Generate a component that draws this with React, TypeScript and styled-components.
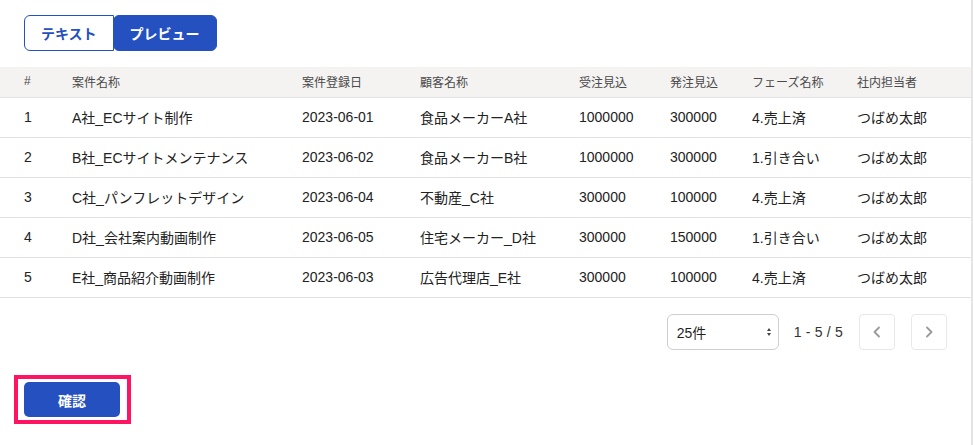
import React from "react";
import styled, { createGlobalStyle } from "styled-components";

const Global = createGlobalStyle`
  html, body { margin: 0; padding: 0; background: #fff; }
  body {
    font-family: "Liberation Sans", "Noto Sans CJK JP", sans-serif;
    color: #262626;
    -webkit-font-smoothing: antialiased;
  }
  * { box-sizing: border-box; }
`;

const BLUE = "#2450c0";

const Page = styled.div`
  width: 973px;
  min-height: 445px;
  border-right: 2px solid #e4e4e4;
  padding-top: 15px;
`;

const TabGroup = styled.div`
  display: flex;
  margin-left: 24px;
  height: 36px;
`;

const Tab = styled.button<{ $active?: boolean }>`
  height: 36px;
  padding: 0 16px 1px;
  font-family: inherit;
  font-size: 14px;
  font-weight: 700;
  cursor: pointer;
  border: 1px solid ${BLUE};
  background: ${(p) => (p.$active ? BLUE : "#fff")};
  color: ${(p) => (p.$active ? "#fff" : BLUE)};
  border-radius: ${(p) => (p.$active ? "6px" : "6px 0 0 6px")};
  margin-left: ${(p) => (p.$active ? "-1px" : "0")};
`;

const cols = "48px 230px 118px 159px 91px 82px 105px 1fr";

const Table = styled.div`
  margin-top: 16px;
  width: 971px;
`;

const HeadRow = styled.div`
  display: grid;
  grid-template-columns: ${cols};
  padding-left: 24px;
  padding-bottom: 2px;
  height: 31px;
  align-items: center;
  background: #f4f3f2;
  border-bottom: 1px solid #e2e2e2;
  font-size: 12px;
  color: #4a4a4a;
`;

const Row = styled.div`
  display: grid;
  grid-template-columns: ${cols};
  padding-left: 24px;
  padding-bottom: 2px;
  height: 40px;
  align-items: center;
  border-bottom: 1px solid #e2e2e2;
  font-size: 14px;
  color: #222;
`;

const Cell = styled.div`
  white-space: nowrap;
`;

const Pager = styled.div`
  display: flex;
  justify-content: flex-end;
  align-items: center;
  margin-top: 16px;
  padding-right: 24px;
  height: 36px;
`;

const Select = styled.div`
  width: 112px;
  height: 36px;
  border: 1px solid #cfcfcf;
  border-radius: 6px;
  display: flex;
  align-items: center;
  justify-content: space-between;
  padding: 0 5px 1px 9px;
  font-size: 14px;
  color: #1f1f1f;
`;

const Range = styled.div`
  margin-left: 15px;
  font-size: 14px;
  color: #333;
  letter-spacing: 0.2px;
`;

const PageButton = styled.button`
  width: 36px;
  height: 36px;
  margin-left: 16px;
  border: 1px solid #e8e8e8;
  border-radius: 4px;
  background: #fff;
  display: flex;
  align-items: center;
  justify-content: center;
  padding: 0;
  color: #9a9a9a;
`;

const Highlight = styled.div`
  display: inline-block;
  margin: 25px 0 0 14px;
  border: 4px solid #ff1462;
  padding: 3px 7px 3px 6px;
`;

const ConfirmButton = styled.button`
  display: block;
  width: 96px;
  height: 35px;
  border: none;
  border-radius: 5px;
  background: ${BLUE};
  color: #fff;
  font-family: inherit;
  font-size: 14px;
  font-weight: 700;
  padding-bottom: 1px;
`;

const rows = [
  ["1", "A社_ECサイト制作", "2023-06-01", "食品メーカーA社", "1000000", "300000", "4.売上済", "つばめ太郎"],
  ["2", "B社_ECサイトメンテナンス", "2023-06-02", "食品メーカーB社", "1000000", "300000", "1.引き合い", "つばめ太郎"],
  ["3", "C社_パンフレットデザイン", "2023-06-04", "不動産_C社", "300000", "100000", "4.売上済", "つばめ太郎"],
  ["4", "D社_会社案内動画制作", "2023-06-05", "住宅メーカー_D社", "300000", "150000", "1.引き合い", "つばめ太郎"],
  ["5", "E社_商品紹介動画制作", "2023-06-03", "広告代理店_E社", "300000", "100000", "4.売上済", "つばめ太郎"],
];

const headers = ["#", "案件名称", "案件登録日", "顧客名称", "受注見込", "発注見込", "フェーズ名称", "社内担当者"];

const Chevron = ({ dir }: { dir: "left" | "right" }) => (
  <svg width="16" height="16" viewBox="0 0 16 16" fill="none">
    <path
      d={dir === "left" ? "M10 3.5 L5.5 8 L10 12.5" : "M6 3.5 L10.5 8 L6 12.5"}
      stroke="currentColor"
      strokeWidth="1.8"
      strokeLinecap="round"
      strokeLinejoin="round"
    />
  </svg>
);

const UpDown = () => (
  <svg width="8" height="12" viewBox="0 0 8 12">
    <path d="M4 2 L6 5 L2 5 Z" fill="#444" />
    <path d="M4 10 L6 7 L2 7 Z" fill="#444" />
  </svg>
);

export default function App() {
  return (
    <Page>
      <Global />
      <TabGroup>
        <Tab>テキスト</Tab>
        <Tab $active>プレビュー</Tab>
      </TabGroup>
      <Table>
        <HeadRow>
          {headers.map((h) => (
            <Cell key={h}>{h}</Cell>
          ))}
        </HeadRow>
        {rows.map((r) => (
          <Row key={r[0]}>
            {r.map((c, i) => (
              <Cell key={i}>{c}</Cell>
            ))}
          </Row>
        ))}
      </Table>
      <Pager>
        <Select>
          <span>25件</span>
          <UpDown />
        </Select>
        <Range>1 - 5 / 5</Range>
        <PageButton>
          <Chevron dir="left" />
        </PageButton>
        <PageButton>
          <Chevron dir="right" />
        </PageButton>
      </Pager>
      <Highlight>
        <ConfirmButton>確認</ConfirmButton>
      </Highlight>
    </Page>
  );
}
